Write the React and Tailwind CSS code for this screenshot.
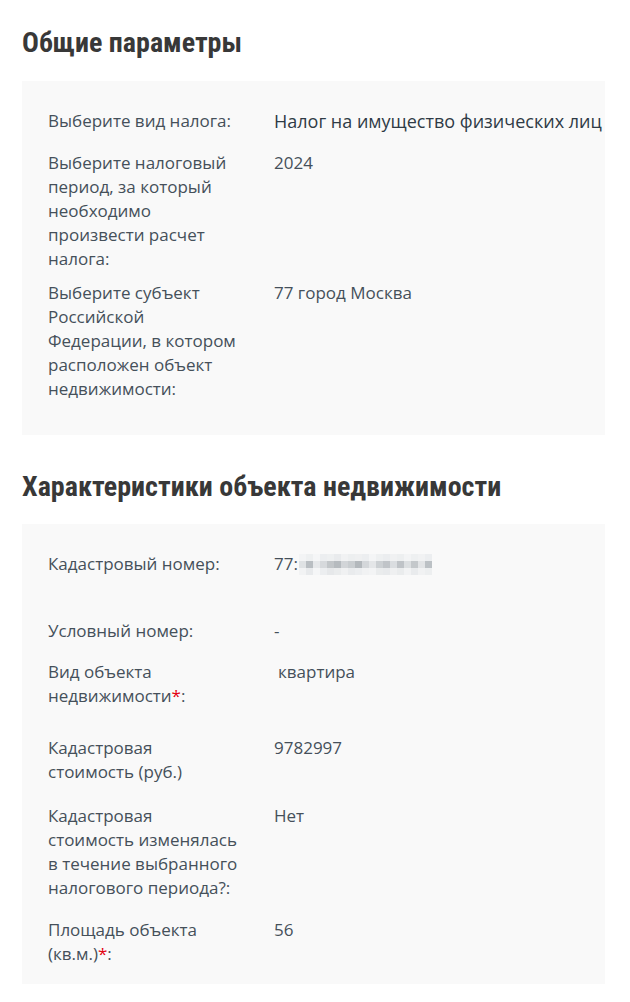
import React from "react";

const body = { fontFamily: '"Open Sans", "Liberation Sans", sans-serif' };
const head = { fontFamily: '"Roboto Condensed", "DejaVu Sans Condensed", "DejaVu Sans", sans-serif' };

function Row({ label, children, className = "" }) {
  return (
    <div className={"flex " + className}>
      <div className="w-[226px] shrink-0 pr-[12px]">{label}</div>
      <div className="flex-1 whitespace-nowrap">{children}</div>
    </div>
  );
}

const Star = () => <span className="text-[#e3000f]">*</span>;

const pix = [
  ["bg-[#f3f4f5]", "bg-[#eef0f1]", "bg-[#f5f6f7]", "bg-[#eceef0]", "bg-[#eef0f1]", "bg-[#e9ebed]", "bg-[#f1f2f3]", "bg-[#edeff0]", "bg-[#eff0f1]", "bg-[#eceef0]", "bg-[#f4f5f6]", "bg-[#eef0f1]", "bg-[#ebedef]", "bg-[#f0f1f2]", "bg-[#edeff0]", "bg-[#f3f4f5]", "bg-[#eef0f1]", "bg-[#f1f2f3]", "bg-[#eceef0]"],
  ["bg-[#dfe2e4]", "bg-[#b9bec2]", "bg-[#e6e8ea]", "bg-[#d6d9dc]", "bg-[#c2c6c9]", "bg-[#b6bbbf]", "bg-[#d2d5d8]", "bg-[#c9cdd0]", "bg-[#b3b8bc]", "bg-[#d4d7da]", "bg-[#e4e6e8]", "bg-[#ccd0d3]", "bg-[#c0c4c8]", "bg-[#dadde0]", "bg-[#bfc3c7]", "bg-[#dcdfe1]", "bg-[#c4c8cb]", "bg-[#e2e4e6]", "bg-[#bcc1c5]"],
  ["bg-[#f2f3f4]", "bg-[#e8eaec]", "bg-[#f5f6f7]", "bg-[#eceef0]", "bg-[#e6e8ea]", "bg-[#eaeced]", "bg-[#f0f1f2]", "bg-[#e9ebed]", "bg-[#eceef0]", "bg-[#f1f2f3]", "bg-[#f3f4f5]", "bg-[#eaeced]", "bg-[#e8eaec]", "bg-[#eff0f1]", "bg-[#eaeced]", "bg-[#f2f3f4]", "bg-[#e9ebed]", "bg-[#f1f2f3]", "bg-[#edeff0]"],
];

function Pixelated() {
  return (
    <span className="inline-flex flex-col align-middle ml-[1px]">
      {pix.map((r, i) => (
        <span key={i} className="flex">
          {r.map((c, j) => (
            <span key={j} className={"block w-[7px] h-[7px] " + c} />
          ))}
        </span>
      ))}
    </span>
  );
}

export default function App() {
  return (
    <div className="w-[630px] min-h-[1002px] bg-white text-[17px] leading-[24px] text-[#45505a]" style={body}>
      <div className="pl-[22px] pr-[25px]">
        <h2 className="pt-[28px] mb-[23px] text-[28px] leading-[30px] font-bold font-stretch-condensed text-[#383838] whitespace-nowrap" style={head}>
          Общие параметры
        </h2>
        <div className="bg-[#f9f9f9] pl-[26px] pt-[28px] pb-[34px]">
          <Row className="mb-[17px]" label="Выберите вид налога:">
            <span className="text-[18px] text-[#2f3b46]">Налог на имущество физических лиц</span>
          </Row>
          <Row className="mb-[10px]" label={<>Выберите налоговый<br />период, за который<br />необходимо<br />произвести расчет<br />налога:</>}>
            2024
          </Row>
          <Row label={<>Выберите субъект<br />Российской<br />Федерации, в котором<br />расположен объект<br />недвижимости:</>}>
            77 город Москва
          </Row>
        </div>

        <h2 className="mt-[37px] mb-[22px] text-[28px] leading-[30px] font-bold font-stretch-condensed text-[#383838] whitespace-nowrap" style={head}>
          Характеристики объекта недвижимости
        </h2>
        <div className="bg-[#f9f9f9] pl-[26px] pt-[28px] pb-[18px]">
          <Row className="mb-[43px]" label="Кадастровый номер:">
            <span className="inline-flex items-center">77:<Pixelated /></span>
          </Row>
          <Row className="mb-[17px]" label="Условный номер:">
            -
          </Row>
          <Row className="mb-[28px]" label={<>Вид объекта<br />недвижимости<Star />:</>}>
            <span className="pl-[4px]">квартира</span>
          </Row>
          <Row className="mb-[20px]" label={<>Кадастровая<br />стоимость (руб.)</>}>
            9782997
          </Row>
          <Row className="mb-[18px]" label={<>Кадастровая<br />стоимость изменялась<br />в течение выбранного<br />налогового периода?:</>}>
            Нет
          </Row>
          <Row label={<>Площадь объекта<br />(кв.м.)<Star />:</>}>
            56
          </Row>
        </div>
      </div>
    </div>
  );
}
